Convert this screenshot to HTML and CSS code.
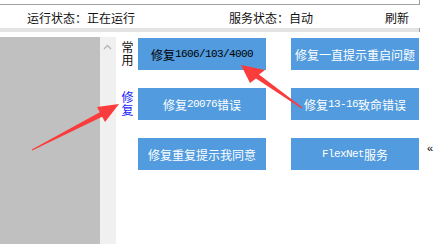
FILE: index.html
```html
<!DOCTYPE html>
<html>

<head>
    <meta charset="utf-8">
    <link rel="stylesheet" href="styles.css">
    <title>服务修复工具</title>
</head>

<body>
    <div class="topline"></div>
    <div class="status">
        <span class="run">运行状态：正在运行</span>
        <span class="svc">服务状态：自动</span>
        <span class="refresh">刷新</span>
    </div>
    <div class="band"></div>

    <div class="main">
        <div class="panel"></div>
        <div class="scroll">
            <svg width="16" height="16" viewBox="0 0 16 16">
                <polyline points="4,10 7.5,6.5 11,10" fill="none" stroke="#b4b4b4" stroke-width="1.3" />
            </svg>
        </div>
        <div class="labels">
            <div class="label">常用</div>
            <div class="label blue">修复</div>
        </div>
        <div class="grid">
            <button class="btn dark">修复<span class="en">1606/103/4000</span></button>
            <button class="btn">修复一直提示重启问题</button>
            <button class="btn">修复<span class="en">20076</span>错误</button>
            <button class="btn">修复<span class="en">13-16</span>致命错误</button>
            <button class="btn">修复重复提示我同意</button>
            <button class="btn"><span class="en">FlexNet</span>服务</button>
        </div>
        <div class="fold">«</div>
    </div>

    <!-- red arrows drawn on top of the page -->
    <svg class="arrows" width="443" height="244" viewBox="0 0 443 244">
        <polygon points="241,65 265,70 259,74.5 302.5,107.5 301.5,108.5 256,78.5 250,83" fill="#fb3c3c" />
        <polygon points="119,104 97,107 99.8,112.3 31.8,149.6 32.2,150.4 102.2,116.7 105,122" fill="#fb3c3c" />
    </svg>
</body>

</html>
```

FILE: styles.css
```css
body {
    margin: 0;
    width: 443px;
    height: 244px;
    overflow: hidden;
    position: relative;
    background-color: white;
    font-family: "Noto Sans CJK SC", sans-serif;
    font-size: 12px;
    color: #111;
}

.topline {
    width: 419px;
    height: 4px;
    border-bottom: 1px solid #a0a0a0;
    border-right: 1px solid #a0a0a0;
}

.status {
    display: flex;
    align-items: center;
    height: 23px;
    padding-left: 27px;
    padding-top: 1px;
    box-sizing: border-box;
}

.run {
    width: 202px;
}

.svc {
    width: 156px;
}

.band {
    width: 419px;
    height: 4px;
    background-color: #e3e3e3;
    border-right: 1px solid #a0a0a0;
}

.main {
    display: flex;
    align-items: flex-start;
    margin-top: 5px;
    height: 207px;
}

.panel {
    width: 100px;
    height: 100%;
    background-color: #c0c0c0;
}

.scroll {
    width: 16px;
    height: 100%;
    background-color: #f0f0f0;
}

.scroll svg {
    display: block;
    margin-top: 2px;
}

.labels {
    width: 22px;
    box-sizing: border-box;
    padding-left: 4px;
    padding-top: 1px;
    display: grid;
    grid-auto-rows: 32px;
    row-gap: 18px;
}

.label {
    align-self: center;
    justify-self: start;
    writing-mode: vertical-lr;
    text-orientation: upright;
    letter-spacing: 1px;
    line-height: 14px;
    color: #111;
}

.label.blue {
    color: #1a1aff;
}

.grid {
    display: grid;
    grid-template-columns: 128px 128px;
    grid-auto-rows: 32px;
    column-gap: 25px;
    row-gap: 18px;
    padding-top: 1px;
}

.btn {
    display: flex;
    align-items: center;
    justify-content: center;
    margin: 0;
    padding: 0;
    border: 0;
    background-color: #519bde;
    color: white;
    font-family: "Noto Sans CJK SC", sans-serif;
    font-size: 12px;
}

.btn.dark {
    color: black;
}

.en {
    font-family: "Liberation Mono", monospace;
    font-size: 11px;
    letter-spacing: -0.6px;
}

.fold {
    margin-left: 8px;
    margin-top: 105px;
    font-family: "Liberation Sans", sans-serif;
    font-size: 11px;
    line-height: 12px;
    color: black;
}

.arrows {
    position: absolute;
    top: 0;
    left: 0;
    pointer-events: none;
}
```
